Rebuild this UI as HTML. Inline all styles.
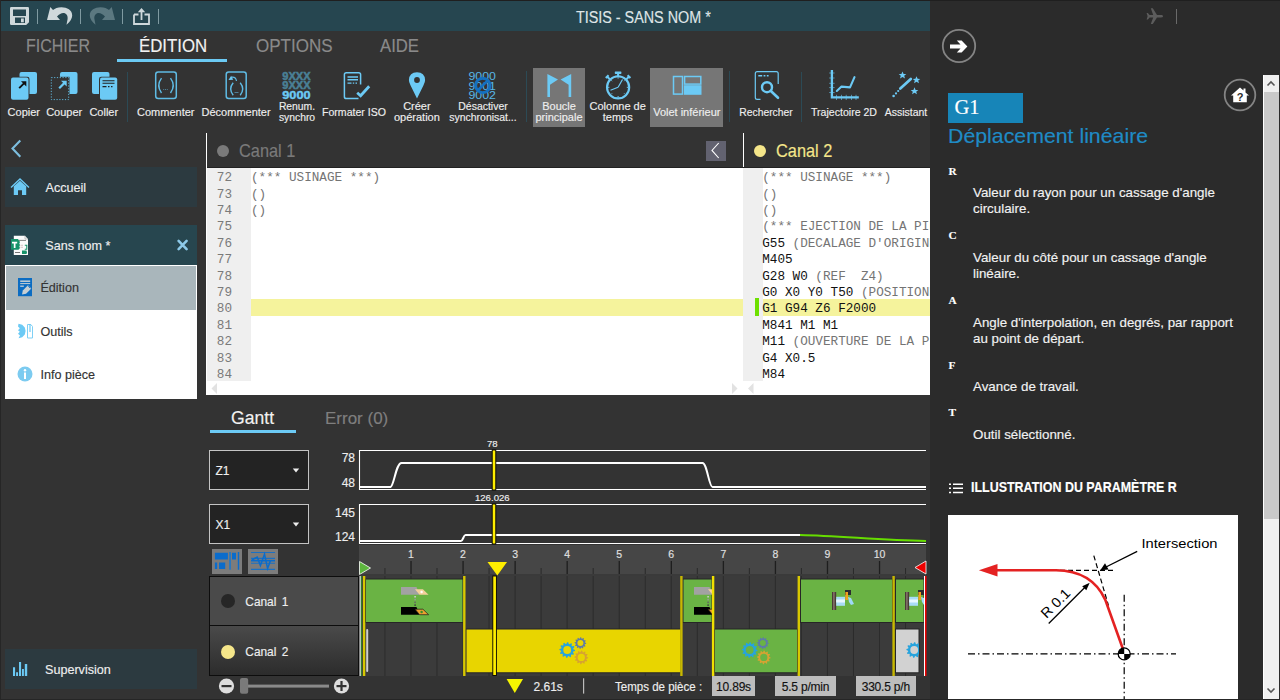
<!DOCTYPE html>
<html><head><meta charset="utf-8">
<style>
*{margin:0;padding:0;box-sizing:border-box}
html,body{width:1280px;height:700px;overflow:hidden}
body{background:#333333;font-family:"Liberation Sans",sans-serif;position:relative;color:#eee}
.t{-webkit-text-stroke:0.15px currentColor}
.a{position:absolute}
.t{position:absolute;white-space:nowrap}
/* title bar */
#topline{left:0;top:0;width:1280px;height:1px;background:#1f1f1f}
#leftline{left:0;top:0;width:1px;height:700px;background:#262626}
#title{left:1px;top:1px;width:929px;height:30px;background:#264650}
.tab{top:35.7px;font-size:17.8px;line-height:20px;color:#8a8a8a;transform:scaleX(0.9);transform-origin:0 0}
.rb{font-size:11px;color:#eeeeee;text-align:center;line-height:12px}
.sep{width:1px;background:#2c4a55}
.hl{background:#767676}
/* right panel */
#rp{left:930px;top:0;width:350px;height:700px;background:#2b2b2b}
.mono{font-family:"Liberation Mono",monospace}
.code{font-size:12.67px;line-height:16.4px;color:#111;white-space:pre}
.cm{color:#747474}
</style></head>
<body>
<div id="rp" class="a"></div>
<div id="topline" class="a"></div>
<div id="leftline" class="a"></div>
<div id="title" class="a"></div>
<div id="botline" class="a" style="left:0;top:699px;width:1280px;height:1px;background:#262626;z-index:5"></div>


<!-- title bar icons -->
<svg class="a" style="left:10px;top:7px" width="19" height="18" viewBox="0 0 19 18"><path d="M0 1.2Q0 0 1.2 0H17.8Q19 0 19 1.2V15.2L16.2 18H1.2Q0 18 0 16.8Z" fill="#cfd8db"/><rect x="3" y="2.5" width="13" height="6.5" fill="#264650"/><rect x="5" y="10.5" width="10" height="5.5" fill="#264650"/><rect x="11" y="11.5" width="2.8" height="3.8" fill="#cfd8db"/></svg>
<div class="a" style="left:37px;top:9px;width:1px;height:15px;background:#7f9aa1"></div>
<svg class="a" style="left:46px;top:7px" width="27" height="18" viewBox="0 0 27 18"><path d="M4.3 0.1L1 13.1H14L11 9.5C13 7.3 15.3 6 17.2 6C20.2 6 22 8.5 21.6 12L20.5 17.8C24 15 26.2 11.5 26.2 8.5C26.2 3 21 0.3 15.5 0.3C11.5 0.3 9 1.5 7 3Z" fill="#cfd8db"/></svg>
<div class="a" style="left:80px;top:9px;width:1px;height:15px;background:#7f9aa1"></div>
<svg class="a" style="left:89px;top:7px" width="27" height="18" viewBox="0 0 27 18"><g transform="translate(27,0) scale(-1,1)"><path d="M4.3 0.1L1 13.1H14L11 9.5C13 7.3 15.3 6 17.2 6C20.2 6 22 8.5 21.6 12L20.5 17.8C24 15 26.2 11.5 26.2 8.5C26.2 3 21 0.3 15.5 0.3C11.5 0.3 9 1.5 7 3Z" fill="#5b7880"/></g></svg>
<div class="a" style="left:122px;top:9px;width:1px;height:15px;background:#7f9aa1"></div>
<svg class="a" style="left:133px;top:7px" width="17" height="18" viewBox="0 0 17 18"><path d="M1 7.5H5.5M11.5 7.5H16V17H1V7.5" fill="none" stroke="#cfd8db" stroke-width="1.8"/><path d="M8.5 13V4" stroke="#cfd8db" stroke-width="1.8"/><path d="M4.8 5.2L8.5 1L12.2 5.2Z" fill="#cfd8db"/></svg>
<div class="a" style="left:158px;top:9px;width:1px;height:15px;background:#7f9aa1"></div>
<div class="t" style="left:576px;top:8.5px;font-size:15.6px;line-height:18px;color:#dfe5e7;transform:scaleX(0.92);transform-origin:0 0">TISIS - SANS NOM *</div>

<!-- tabs -->
<div class="t tab" style="left:25.5px">FICHIER</div>
<div class="t tab" style="left:138.5px;color:#f2f2f2;transform:scaleX(0.945)">ÉDITION</div>
<div class="a" style="left:117px;top:59px;width:110px;height:3px;background:#6ccaf4"></div>
<div class="t tab" style="left:255.5px;transform:scaleX(0.957)">OPTIONS</div>
<div class="t tab" style="left:380px;transform:scaleX(0.94)">AIDE</div>


<!-- ribbon icons -->
<div class="a hl" style="left:533px;top:68px;width:52px;height:59px"></div>
<div class="a hl" style="left:650px;top:68px;width:73px;height:59px"></div>
<div class="a sep" style="left:127px;top:72px;height:50px"></div>
<div class="a sep" style="left:526px;top:71px;height:51px"></div>
<div class="a sep" style="left:729px;top:71px;height:51px"></div>
<div class="a sep" style="left:801px;top:72px;height:50px"></div>
<svg class="a" style="left:0;top:60px" width="930" height="45" viewBox="0 60 930 45">
 <!-- Copier -->
 <rect x="19.5" y="72" width="17.5" height="22" rx="2" fill="#6ccaf5"/>
 <rect x="10.5" y="76.8" width="19" height="23.8" rx="2.2" fill="#333"/>
 <rect x="11" y="77.5" width="17.5" height="22.3" rx="2" fill="#6ccaf5"/>
 <path d="M19.2 88.2L24.5 82.9" stroke="#111" stroke-width="1.9"/><path d="M21 81.2H26.3V86.5Z" fill="#111"/>
 <!-- Couper -->
 <rect x="60" y="72" width="17.5" height="22" rx="2" fill="#6ccaf5"/>
 <rect x="50.5" y="76.8" width="19" height="23.8" fill="#333"/>
 <rect x="51.3" y="77.6" width="17.4" height="22" fill="none" stroke="#5fb3d8" stroke-width="1" stroke-dasharray="1.2 1.6"/>
 <path d="M59.2 88.2L64.5 82.9" stroke="#6ccaf5" stroke-width="2.2"/><path d="M61 80.8H66.7V86.5Z" fill="#6ccaf5"/>
 <!-- Coller -->
 <rect x="92" y="72" width="17.5" height="22" rx="2" fill="#6ccaf5"/>
 <rect x="99" y="76.8" width="19" height="23.8" rx="2.2" fill="#333"/>
 <rect x="100" y="77.5" width="17.2" height="22.3" rx="2" fill="#6ccaf5"/>
 <path d="M102.5 80.8H114.5M102.5 83.2H114.5" stroke="#222" stroke-width="1.1"/>
 <path d="M102.5 86.6H106.5M108 86.6H109.5M111 86.6H112.5" stroke="#222" stroke-width="1.1"/>
 <!-- Commenter -->
 <rect x="155.7" y="72" width="20.6" height="26.6" rx="2.5" fill="none" stroke="#5fbbe4" stroke-width="1.5"/>
 <path d="M161.5 78.2Q156 85.6 161.5 93" fill="none" stroke="#5fbbe4" stroke-width="1.4"/>
 <path d="M170.5 78.2Q176 85.6 170.5 93" fill="none" stroke="#5fbbe4" stroke-width="1.4"/>
 <path d="M163.2 89.5H168.5" stroke="#4f7f95" stroke-width="1" stroke-dasharray="1 0.8"/>
 <!-- Decommenter -->
 <rect x="226.2" y="72" width="20" height="26.6" rx="2.5" fill="none" stroke="#5fbbe4" stroke-width="1.5"/>
 <path d="M233.2 82.8Q228.2 89 233.2 95.3" fill="none" stroke="#5fbbe4" stroke-width="1.4"/>
 <path d="M240.2 82.8Q245.2 89 240.2 95.3" fill="none" stroke="#5fbbe4" stroke-width="1.4"/>
 <path d="M234.5 92.5H238.5" stroke="#4f7f95" stroke-width="1"/>
 <path d="M231.8 77.2Q235.8 76.8 236.5 81" fill="none" stroke="#5fbbe4" stroke-width="1.2"/>
 <path d="M228.5 80L231.2 75.8L233.2 79.8Z" fill="#6ccaf5"/>
 <!-- Renum -->
 <text x="282.3" y="80.2" font-family="Liberation Sans" font-weight="bold" font-size="10.8" fill="#4a8096" stroke="#4a8096" stroke-width="0.5" textLength="28.3" lengthAdjust="spacingAndGlyphs">9XXX</text>
 <text x="282.3" y="89.4" font-family="Liberation Sans" font-weight="bold" font-size="10.8" fill="#4a8096" stroke="#4a8096" stroke-width="0.5" textLength="28.3" lengthAdjust="spacingAndGlyphs">9XXX</text>
 <text x="282.3" y="99.3" font-family="Liberation Sans" font-weight="bold" font-size="11" fill="#6ccaf5" stroke="#6ccaf5" stroke-width="0.4" textLength="28.3" lengthAdjust="spacingAndGlyphs">9000</text>
 <!-- Formater ISO -->
 <path d="M358.5 98.6H346.3Q344.4 98.6 344.4 96.7V74.6Q344.4 72.7 346.3 72.7H358.7Q360.6 72.7 360.6 74.6V84.5" fill="none" stroke="#6ccaf5" stroke-width="1.5"/>
 <path d="M347.5 77H358M347.5 79.8H358" stroke="#6ccaf5" stroke-width="1.5"/>
 <path d="M347.5 83.2H351.5M352.8 83.2H354.2M355.5 83.2H357" stroke="#6ccaf5" stroke-width="1.3"/>
 <path d="M357.2 92.8L360.6 95.8L369.2 86.2" fill="none" stroke="#6ccaf5" stroke-width="2.8"/>
 <!-- Pin -->
 <path d="M417 98.5L410.6 85.5Q408.7 81.5 408.9 80Q409.3 72.2 417 72.2Q424.7 72.2 425.1 80Q425.3 81.5 423.4 85.5Z" fill="#6ccaf5"/>
 <circle cx="417" cy="80" r="2.9" fill="#333"/>
 <!-- Desactiver -->
 <text x="468.5" y="80.2" font-family="Liberation Sans" font-size="10.5" fill="#58b6e6" textLength="27.5" lengthAdjust="spacingAndGlyphs">9000</text>
 <text x="468.5" y="89.6" font-family="Liberation Sans" font-size="10.5" fill="#58b6e6" textLength="27.5" lengthAdjust="spacingAndGlyphs">9001</text>
 <text x="468.5" y="99" font-family="Liberation Sans" font-size="10.5" fill="#58b6e6" textLength="27.5" lengthAdjust="spacingAndGlyphs">9002</text>
 <circle cx="482.8" cy="85.4" r="7.2" fill="none" stroke="#1470c0" stroke-width="2.9"/>
 <path d="M478 90.2L487.6 80.6" stroke="#1470c0" stroke-width="2.6"/>
 <!-- Boucle flags -->
 <path d="M547.4 73.9L558 79.6L550 84.8V96.9H547.4Z" fill="#6ccaf5"/>
 <path d="M571.2 73.9L560.6 79.6L568.6 84.8V96.9H571.2Z" fill="#6ccaf5"/>
 <!-- Stopwatch -->
 <circle cx="618.1" cy="87.3" r="11.1" fill="none" stroke="#6ccaf5" stroke-width="2.1"/>
 <rect x="614.8" y="71.5" width="6.6" height="2.4" rx="0.6" fill="#6ccaf5"/>
 <rect x="617.1" y="73.5" width="2" height="3" fill="#6ccaf5"/>
 <path d="M607.2 76.6L609.8 79.2M605.8 78L608.6 75.2" stroke="#6ccaf5" stroke-width="2"/>
 <path d="M629 76.6L626.4 79.2M630.4 78L627.6 75.2" stroke="#6ccaf5" stroke-width="2"/>
 <path d="M618.1 87.3L622.5 79.5M618.1 87.3L610.5 90.2" stroke="#6ccaf5" stroke-width="1.2"/>
 <path d="M618.1 77.2V78.6M618.1 96V97.4M608 87.3H609.4M626.8 87.3H628.2M611 80.2L612 81.2M624.2 93.4L625.2 94.4M611 94.4L612 93.4M624.2 81.2L625.2 80.2" stroke="#6ccaf5" stroke-width="1"/>
 <!-- Volet -->
 <rect x="673.5" y="76.5" width="9" height="17.6" fill="none" stroke="#6ccaf5" stroke-width="1.5"/>
 <rect x="684.6" y="76.5" width="16.2" height="7.6" fill="none" stroke="#6ccaf5" stroke-width="1.5"/>
 <rect x="683.9" y="85.2" width="17.6" height="9.6" fill="#6ccaf5"/>
 <!-- Rechercher -->
 <path d="M760.5 99.3H757.2Q755.3 99.3 755.3 97.4V73.5Q755.3 71.6 757.2 71.6H776.3Q778.2 71.6 778.2 73.5V84" fill="none" stroke="#6ccaf5" stroke-width="1.2"/>
 <path d="M758.3 75.8H762.2M763.6 75.8H765.4M766.8 75.8H768.6" stroke="#6ccaf5" stroke-width="1.6"/>
 <circle cx="767" cy="87.2" r="5" fill="none" stroke="#6ccaf5" stroke-width="2.4"/>
 <path d="M770.6 90.8L778 97.8" stroke="#6ccaf5" stroke-width="2.6" stroke-linecap="round"/>
 <!-- Trajectoire -->
 <path d="M831.9 70V97.4H858.8" fill="none" stroke="#6ccaf5" stroke-width="2.3"/>
 <path d="M829.2 73H834.6M829.2 78H834.6M829.2 83.3H834.6M829.2 87.6H834.6M829.2 92.5H834.6M836.5 94.8V100M841.5 94.8V100M846.2 94.8V100M851.5 94.8V100M856 94.8V100" stroke="#6ccaf5" stroke-width="0.8" opacity="0.75"/>
 <path d="M836.8 91L841.5 86.6L850 87.4L854.5 77.2" fill="none" stroke="#6ccaf5" stroke-width="2.1" stroke-linecap="round" stroke-linejoin="round"/>
 <!-- Assistant -->
 <path d="M900.3 88.6L910.8 78.9" stroke="#6ccaf5" stroke-width="2.7" stroke-linecap="round"/><circle cx="898.2" cy="91" r="1.1" fill="#6ccaf5"/><circle cx="896" cy="93.4" r="1.1" fill="#6ccaf5"/><circle cx="893.6" cy="96" r="1.3" fill="#6ccaf5"/>
 <path transform="translate(0,-1.2)" d="M902.5 72.6L903.6 75.2L906.3 75.3L904.2 77L905 79.6L902.5 78.1L900 79.6L900.8 77L898.7 75.3L901.4 75.2Z" fill="#6ccaf5"/>
 <path transform="translate(0,-1.5)" d="M916.5 77.7L917.6 80.3L920.3 80.4L918.2 82.1L919 84.7L916.5 83.2L914 84.7L914.8 82.1L912.7 80.4L915.4 80.3Z" fill="#6ccaf5"/>
 <path transform="translate(0,-0.9)" d="M914.5 88.2L915.6 90.8L918.3 90.9L916.2 92.6L917 95.2L914.5 93.7L912 95.2L912.8 92.6L910.7 90.9L913.4 90.8Z" fill="#6ccaf5"/>
</svg>
<div class="t rb" style="left:-26.2px;top:105.9px;width:100px;line-height:12px">Copier</div>
<div class="t rb" style="left:14.2px;top:105.9px;width:100px;line-height:12px">Couper</div>
<div class="t rb" style="left:53.8px;top:105.9px;width:100px;line-height:12px">Coller</div>
<div class="t rb" style="left:115.8px;top:105.9px;width:100px;line-height:12px">Commenter</div>
<div class="t rb" style="left:186.1px;top:105.9px;width:100px;line-height:12px">Décommenter</div>
<div class="t rb" style="left:246.6px;top:101.2px;width:100px;transform:scaleX(0.94);transform-origin:50% 0;line-height:11.2px">Renum.<br>synchro</div>
<div class="t rb" style="left:304.4px;top:105.9px;width:100px;transform:scaleX(0.96);transform-origin:50% 0;line-height:12px">Formater ISO</div>
<div class="t rb" style="left:366.9px;top:101.2px;width:100px;line-height:11.2px">Créer<br>opération</div>
<div class="t rb" style="left:432.5px;top:101.2px;width:100px;transform:scaleX(0.95);transform-origin:50% 0;line-height:11.2px">Désactiver<br>synchronisat...</div>
<div class="t rb" style="left:509.0px;top:101.2px;width:100px;line-height:11.2px">Boucle<br>principale</div>
<div class="t rb" style="left:567.7px;top:101.2px;width:100px;line-height:11.2px">Colonne de<br>temps</div>
<div class="t rb" style="left:636.8px;top:105.9px;width:100px;line-height:12px">Volet inférieur</div>
<div class="t rb" style="left:716.1px;top:105.9px;width:100px;transform:scaleX(0.94);transform-origin:50% 0;line-height:12px">Rechercher</div>
<div class="t rb" style="left:794.0px;top:105.9px;width:100px;transform:scaleX(0.96);transform-origin:50% 0;line-height:12px">Trajectoire 2D</div>
<div class="t rb" style="left:855.8px;top:105.9px;width:100px;transform:scaleX(0.95);transform-origin:50% 0;line-height:12px">Assistant</div>


<!-- sidebar -->
<svg class="a" style="left:10px;top:139px" width="13" height="20" viewBox="0 0 13 20"><path d="M10.3 1.5L2.5 9.5L10.3 17.8" fill="none" stroke="#7dbedf" stroke-width="2.1"/></svg>
<div class="a" style="left:5px;top:167px;width:192px;height:40px;background:#2c3a40"></div>
<svg class="a" style="left:10px;top:178px" width="20" height="18" viewBox="0 0 20 18"><path d="M1 9.5L10 1L19 9.5" fill="none" stroke="#6ccaf5" stroke-width="1.4"/><path d="M3.8 8.3L10 2.8L16.2 8.3V17H12V12.2H8V17H3.8Z" fill="#6ccaf5"/></svg>
<div class="t" style="left:45.5px;top:180.1px;font-size:12.6px;line-height:16px;color:#eee;">Accueil</div>
<div class="a" style="left:5px;top:225px;width:192px;height:40px;background:#27464f"></div>
<svg class="a" style="left:10px;top:235px" width="19" height="21" viewBox="10 235 19 21"><path d="M13.8 235.8H25L28 239V255H13.8Z" fill="#fbfbfb"/><path d="M25 235.8V239H28" fill="none" stroke="#9a9a9a" stroke-width="0.6"/><path d="M19 240.4H26" stroke="#777" stroke-width="0.9"/><path d="M20.5 245.3H23M20.5 247.3H23" stroke="#c8b0b0" stroke-width="0.7"/><path d="M15 252.5H20" stroke="#666" stroke-width="0.9"/><path d="M24.8 245.2H26.8V249.2H24.8" fill="none" stroke="#17936a" stroke-width="1.1"/><path d="M22 250.5H26.5L27 252.5L26.5 254H22Z" fill="#17936a"/><path d="M11 239H18L19 240.5L20 242L19.3 243.5L20 245L19.3 246.5L20 248L18.5 249.8H11Z" fill="#17936a"/><path d="M12 241.8H17.2V243.6H15.5V248H13.8V243.6H12Z" fill="#fff"/></svg>
<div class="t" style="left:45.3px;top:238.2px;font-size:12.6px;line-height:16px;color:#eee;">Sans nom *</div>
<svg class="a" style="left:175.5px;top:239px" width="13" height="12" viewBox="0 0 13 12"><path d="M2.6 1.9L10.6 10.1M10.6 1.9L2.6 10.1" stroke="#8dc9e8" stroke-width="2.6" stroke-linecap="round"/></svg>
<div class="a" style="left:5px;top:265px;width:192px;height:134px;background:#ffffff"></div>
<div class="a" style="left:6px;top:266px;width:190px;height:44px;background:#a9b6bb"></div>
<svg class="a" style="left:18px;top:277.8px" width="15" height="19" viewBox="0 0 15 19"><rect x="0" y="0" width="14" height="18.2" fill="#0b6cc2"/><path d="M2.2 3.2H12.2" stroke="#c7cfd3" stroke-width="1.5"/><path d="M2.2 5.6H12.2" stroke="#c7cfd3" stroke-width="1"/><path d="M2.2 8.2H5.8" stroke="#c7cfd3" stroke-width="1.3"/><path d="M4 16.4L4.8 12.4L10 7.2L13.3 10.5L8.1 15.7Z" fill="#c7cfd3"/><path d="M10.2 8.2L12.3 10.3" stroke="#0b6cc2" stroke-width="0.8"/></svg>
<div class="t" style="left:40.4px;top:280.1px;font-size:12.6px;line-height:16px;color:#333;">Édition</div>
<svg class="a" style="left:17px;top:323px" width="17" height="16" viewBox="0 0 17 16"><path d="M1.5 0.8L5.2 1.8L7.8 4.5L8.6 8L7.8 11.5L5.2 14.2L1.5 15.2L3 12.6L1 10.8L2.8 8.8L1 7.2L2.8 5.2L1 3.4Z" fill="#6ccaf5"/><path d="M10.5 1.5H13.8L15.5 3.5V15H10.5Z" fill="none" stroke="#7fd0f5" stroke-width="1"/><path d="M13 1V9" stroke="#6ccaf5" stroke-width="1.2"/></svg>
<div class="t" style="left:40.4px;top:323.7px;font-size:12.6px;line-height:16px;color:#333;">Outils</div>
<svg class="a" style="left:17px;top:366px" width="16" height="16" viewBox="0 0 16 16"><circle cx="8" cy="8" r="7.5" fill="#7ccbf0"/><rect x="7" y="6.5" width="2" height="6.5" fill="#fff"/><circle cx="8" cy="4.2" r="1.2" fill="#fff"/></svg>
<div class="t" style="left:40.4px;top:367.3px;font-size:12.6px;line-height:16px;color:#333;">Info pièce</div>
<div class="a" style="left:5px;top:649px;width:192px;height:40px;background:#2c3a40"></div>
<svg class="a" style="left:12px;top:661px" width="17" height="16" viewBox="0 0 17 16"><path d="M1 6.2H3.1V15H1ZM4.1 11.3H6V15H4.1ZM7 1H9.1V15H7ZM10 8H11.9V15H10ZM12.8 2.9H15.2V15H12.8Z" fill="#6ccaf5"/></svg>
<div class="t" style="left:45px;top:662.3px;font-size:12.6px;line-height:16px;color:#eee;">Supervision</div>


<!-- editor -->
<div class="a" style="left:206px;top:133px;width:1px;height:262px;background:#ffffff"></div>
<div class="a" style="left:743px;top:133px;width:1px;height:35px;background:#ffffff"></div>
<div class="a" style="left:207px;top:167px;width:723px;height:1px;background:#222"></div>
<div class="a" style="left:207px;top:168px;width:723px;height:227px;background:#ffffff"></div>
<div class="a" style="left:207px;top:168px;width:44px;height:213px;background:#efefef"></div>
<div class="a" style="left:743px;top:168px;width:20px;height:213px;background:#efefef"></div>
<div class="a" style="left:251px;top:299.2px;width:491.5px;height:16.4px;background:#f5f39c"></div>
<div class="a" style="left:763px;top:299.2px;width:167px;height:16.4px;background:#f5f39c"></div>
<div class="a" style="left:755px;top:298px;width:4px;height:18px;background:#6ee000"></div>
<div class="a mono" style="left:208px;top:170.2px;width:24px;font-size:12.67px;line-height:16.4px;color:#7a7a7a;text-align:right"><div>72</div><div>73</div><div>74</div><div>75</div><div>76</div><div>77</div><div>78</div><div>79</div><div>80</div><div>81</div><div>82</div><div>83</div><div>84</div></div>
<div class="a mono code" style="left:251px;top:170.2px;width:491px;overflow:hidden"><div><span class="cm">(*** USINAGE ***)</span></div><div><span class="cm">()</span></div><div><span class="cm">()</span></div><div>&nbsp;</div><div>&nbsp;</div><div>&nbsp;</div><div>&nbsp;</div><div>&nbsp;</div><div>&nbsp;</div><div>&nbsp;</div><div>&nbsp;</div><div>&nbsp;</div><div>&nbsp;</div></div>
<div class="a mono code" style="left:762.2px;top:170.2px;width:167.8px;overflow:hidden"><div><span class="cm">(*** USINAGE ***)</span></div><div><span class="cm">()</span></div><div><span class="cm">()</span></div><div><span class="cm">(*** EJECTION DE LA PIECE ***)</span></div><div>G55 <span class="cm">(DECALAGE D'ORIGINE)</span></div><div>M405</div><div>G28 W0 <span class="cm">(REF  Z4)</span></div><div>G0 X0 Y0 T50 <span class="cm">(POSITIONNEMENT)</span></div><div>G1 G94 Z6 F2000</div><div>M841 M1 M1</div><div>M11 <span class="cm">(OUVERTURE DE LA PINCE)</span></div><div>G4 X0.5</div><div>M84</div></div>
<svg class="a" style="left:206px;top:381px" width="724" height="14" viewBox="206 381 724 14"><path d="M217 383V394L211.5 388.5Z" fill="#e2e2e2"/><path d="M732 383V394L737.5 388.5Z" fill="#e2e2e2"/><path d="M753.5 383V394L748 388.5Z" fill="#e2e2e2"/></svg>
<div class="a" style="left:217px;top:145px;width:12px;height:12px;border-radius:6px;background:#7a7a7a"></div>
<div class="t" style="left:239px;top:140px;font-size:17.8px;line-height:22px;color:#7a7a7a;transform:scaleX(0.92);transform-origin:0 0">Canal 1</div>
<div class="a" style="left:706px;top:141px;width:20px;height:20px;background:#626270"></div>
<svg class="a" style="left:706px;top:141px" width="20" height="20" viewBox="0 0 20 20"><path d="M12.7 2L6 9.4L12.7 17" fill="none" stroke="#fff" stroke-width="1.1"/></svg>
<div class="a" style="left:754px;top:145px;width:12px;height:12px;border-radius:6px;background:#f5e68a"></div>
<div class="t" style="left:775.5px;top:140px;font-size:17.8px;line-height:22px;color:#f5e68a;transform:scaleX(0.92);transform-origin:0 0">Canal 2</div>

<!-- gantt -->
<div class="t" style="left:231px;top:408.4px;font-size:17.6px;line-height:20px;color:#f2f2f2">Gantt</div>
<div class="t" style="left:325px;top:408.6px;font-size:17px;line-height:20px;color:#7f7f7f">Error (0)</div>
<div class="a" style="left:210px;top:430px;width:86px;height:3px;background:#6ccaf5"></div>
<div class="a" style="left:209px;top:450px;width:100px;height:40px;border:1px solid #c4c4c4;background:#232323"></div>
<div class="t" style="left:215.5px;top:465.2px;font-size:12px;line-height:12px;color:#f0f0f0">Z1</div>
<svg class="a" style="left:292px;top:467.5px" width="8" height="5" viewBox="0 0 8 5"><path d="M0.8 0.5H7.2L4 4.5Z" fill="#eee"/></svg>
<div class="a" style="left:209px;top:504px;width:100px;height:40px;border:1px solid #c4c4c4;background:#232323"></div>
<div class="t" style="left:215.5px;top:519.2px;font-size:12px;line-height:12px;color:#f0f0f0">X1</div>
<svg class="a" style="left:292px;top:521.5px" width="8" height="5" viewBox="0 0 8 5"><path d="M0.8 0.5H7.2L4 4.5Z" fill="#eee"/></svg>
<div class="t" style="left:295px;width:60px;text-align:right;top:451.4px;font-size:12px;line-height:14px;color:#eee">78</div>
<div class="t" style="left:295px;width:60px;text-align:right;top:475.6px;font-size:12px;line-height:14px;color:#eee">48</div>
<div class="t" style="left:295px;width:60px;text-align:right;top:505.8px;font-size:12px;line-height:14px;color:#eee">145</div>
<div class="t" style="left:295px;width:60px;text-align:right;top:529.6px;font-size:12px;line-height:14px;color:#eee">124</div>
<div class="t" style="left:452.3px;width:80px;text-align:center;top:437.4px;font-size:9.6px;line-height:14px;color:#eee">78</div>
<div class="t" style="left:452.3px;width:80px;text-align:center;top:491.2px;font-size:9.6px;line-height:14px;color:#eee">126.026</div>
<svg class="a" style="left:0;top:0" width="930" height="700" viewBox="0 0 930 700">
<path d="M926 450.5H359.5V489.5H926" fill="none" stroke="#fff" stroke-width="1.1"/>
<path d="M926 504.5H359.5V543.5H926" fill="none" stroke="#fff" stroke-width="1.1"/>
<path d="M360 487H390.5C394 486 396 463 401.5 463H702.5C707 463 709 487 712.5 487H926" fill="none" stroke="#fff" stroke-width="2"/>
<path d="M360 541H461C463 541 463.5 535 465.5 535H800" fill="none" stroke="#fff" stroke-width="2"/>
<path d="M800 535C840 536 880 540 926 541" fill="none" stroke="#66dd00" stroke-width="2"/>
<rect x="492.2" y="450" width="3.6" height="40" fill="#ffee00" stroke="#000" stroke-width="0.9"/>
<rect x="492.2" y="504" width="3.6" height="40" fill="#ffee00" stroke="#000" stroke-width="0.9"/>
<rect x="359" y="545" width="567" height="29" fill="#464646"/>
<rect x="359" y="574" width="567" height="2" fill="#3a3a3a"/>
<rect x="359" y="576" width="567" height="100" fill="#3b3b3b"/>
<rect x="358.40" y="576" width="1" height="100" fill="#2c2c2c"/>
<rect x="384.43" y="576" width="1" height="100" fill="#2c2c2c"/>
<rect x="384.43" y="568" width="1" height="6" fill="#2a2a2a"/>
<rect x="410.46" y="576" width="1" height="100" fill="#2c2c2c"/>
<rect x="410.36" y="561" width="1.3" height="13" fill="#1e1e1e"/>
<rect x="436.49" y="576" width="1" height="100" fill="#2c2c2c"/>
<rect x="436.49" y="568" width="1" height="6" fill="#2a2a2a"/>
<rect x="462.52" y="576" width="1" height="100" fill="#2c2c2c"/>
<rect x="462.42" y="561" width="1.3" height="13" fill="#1e1e1e"/>
<rect x="488.55" y="576" width="1" height="100" fill="#2c2c2c"/>
<rect x="488.55" y="568" width="1" height="6" fill="#2a2a2a"/>
<rect x="514.58" y="576" width="1" height="100" fill="#2c2c2c"/>
<rect x="514.48" y="561" width="1.3" height="13" fill="#1e1e1e"/>
<rect x="540.61" y="576" width="1" height="100" fill="#2c2c2c"/>
<rect x="540.61" y="568" width="1" height="6" fill="#2a2a2a"/>
<rect x="566.64" y="576" width="1" height="100" fill="#2c2c2c"/>
<rect x="566.54" y="561" width="1.3" height="13" fill="#1e1e1e"/>
<rect x="592.67" y="576" width="1" height="100" fill="#2c2c2c"/>
<rect x="592.67" y="568" width="1" height="6" fill="#2a2a2a"/>
<rect x="618.70" y="576" width="1" height="100" fill="#2c2c2c"/>
<rect x="618.60" y="561" width="1.3" height="13" fill="#1e1e1e"/>
<rect x="644.73" y="576" width="1" height="100" fill="#2c2c2c"/>
<rect x="644.73" y="568" width="1" height="6" fill="#2a2a2a"/>
<rect x="670.76" y="576" width="1" height="100" fill="#2c2c2c"/>
<rect x="670.66" y="561" width="1.3" height="13" fill="#1e1e1e"/>
<rect x="696.79" y="576" width="1" height="100" fill="#2c2c2c"/>
<rect x="696.79" y="568" width="1" height="6" fill="#2a2a2a"/>
<rect x="722.82" y="576" width="1" height="100" fill="#2c2c2c"/>
<rect x="722.72" y="561" width="1.3" height="13" fill="#1e1e1e"/>
<rect x="748.85" y="576" width="1" height="100" fill="#2c2c2c"/>
<rect x="748.85" y="568" width="1" height="6" fill="#2a2a2a"/>
<rect x="774.88" y="576" width="1" height="100" fill="#2c2c2c"/>
<rect x="774.78" y="561" width="1.3" height="13" fill="#1e1e1e"/>
<rect x="800.91" y="576" width="1" height="100" fill="#2c2c2c"/>
<rect x="800.91" y="568" width="1" height="6" fill="#2a2a2a"/>
<rect x="826.94" y="576" width="1" height="100" fill="#2c2c2c"/>
<rect x="826.84" y="561" width="1.3" height="13" fill="#1e1e1e"/>
<rect x="852.97" y="576" width="1" height="100" fill="#2c2c2c"/>
<rect x="852.97" y="568" width="1" height="6" fill="#2a2a2a"/>
<rect x="879.00" y="576" width="1" height="100" fill="#2c2c2c"/>
<rect x="878.90" y="561" width="1.3" height="13" fill="#1e1e1e"/>
<rect x="905.03" y="576" width="1" height="100" fill="#2c2c2c"/>
<rect x="905.03" y="568" width="1" height="6" fill="#2a2a2a"/>
</svg>
<div class="t" style="left:370.96px;width:80px;text-align:center;top:547.0px;font-size:10.5px;line-height:14px;color:#e0e0e0">1</div>
<div class="t" style="left:423.02px;width:80px;text-align:center;top:547.0px;font-size:10.5px;line-height:14px;color:#e0e0e0">2</div>
<div class="t" style="left:475.0799999999999px;width:80px;text-align:center;top:547.0px;font-size:10.5px;line-height:14px;color:#e0e0e0">3</div>
<div class="t" style="left:527.14px;width:80px;text-align:center;top:547.0px;font-size:10.5px;line-height:14px;color:#e0e0e0">4</div>
<div class="t" style="left:579.2px;width:80px;text-align:center;top:547.0px;font-size:10.5px;line-height:14px;color:#e0e0e0">5</div>
<div class="t" style="left:631.26px;width:80px;text-align:center;top:547.0px;font-size:10.5px;line-height:14px;color:#e0e0e0">6</div>
<div class="t" style="left:683.3199999999999px;width:80px;text-align:center;top:547.0px;font-size:10.5px;line-height:14px;color:#e0e0e0">7</div>
<div class="t" style="left:735.38px;width:80px;text-align:center;top:547.0px;font-size:10.5px;line-height:14px;color:#e0e0e0">8</div>
<div class="t" style="left:787.44px;width:80px;text-align:center;top:547.0px;font-size:10.5px;line-height:14px;color:#e0e0e0">9</div>
<div class="t" style="left:839.5px;width:80px;text-align:center;top:547.0px;font-size:10.5px;line-height:14px;color:#e0e0e0">10</div>
<svg class="a" style="left:0;top:0" width="930" height="700" viewBox="0 0 930 700">
<rect x="365.5" y="579" width="97.5" height="43.5" fill="#6ab344" stroke="#262626" stroke-width="1"/>
<rect x="683" y="579" width="29" height="43.5" fill="#6ab344" stroke="#262626" stroke-width="1"/>
<rect x="800.5" y="579" width="92.0" height="43.5" fill="#6ab344" stroke="#262626" stroke-width="1"/>
<rect x="895.5" y="579" width="28.5" height="43.5" fill="#6ab344" stroke="#262626" stroke-width="1"/>
<rect x="466" y="629" width="215" height="43.799999999999955" fill="#e8d500" stroke="#262626" stroke-width="1"/>
<rect x="714.5" y="629" width="83.0" height="43.799999999999955" fill="#6ab344" stroke="#262626" stroke-width="1"/>
<rect x="895.5" y="629" width="23.5" height="43.799999999999955" fill="#d2d2d2" stroke="#262626" stroke-width="1"/>
<path d="M401.00 587.00 L416.50 587.00 L419.60 594.70 L401.00 594.70Z" fill="#a2a2a2"/><path d="M415.00 589.20 L422.90 589.20 L428.60 594.70 L419.60 594.70Z" fill="#f4d09c"/><circle cx="421.6" cy="592" r="1.2" fill="#fff"/><rect x="414.3" y="596" width="1.6" height="1.5" fill="#ccc"/><rect x="414.3" y="598.8" width="1.6" height="1.5" fill="#999"/><rect x="414.3" y="601.6" width="1.6" height="1.5" fill="#666"/><rect x="414.3" y="604.4" width="1.6" height="1.5" fill="#444"/><path d="M401.00 607.00 L416.50 607.00 L419.60 614.70 L401.00 614.70Z" fill="#000"/><path d="M415.00 609.20 L422.90 609.20 L428.60 614.70 L419.60 614.70Z" fill="#eca030" stroke="#1a1a1a" stroke-width="0.7"/><circle cx="421.6" cy="612" r="1.3" fill="#3c8c2c"/>
<svg x="683" y="579" width="29" height="43.5" viewBox="683 579 29 43.5"><path d="M694.00 587.00 L709.50 587.00 L712.60 594.70 L694.00 594.70Z" fill="#a2a2a2"/><path d="M708.00 589.20 L715.90 589.20 L721.60 594.70 L712.60 594.70Z" fill="#f4d09c"/><circle cx="714.6" cy="592" r="1.2" fill="#fff"/><rect x="707.3" y="596" width="1.6" height="1.5" fill="#ccc"/><rect x="707.3" y="598.8" width="1.6" height="1.5" fill="#999"/><rect x="707.3" y="601.6" width="1.6" height="1.5" fill="#666"/><rect x="707.3" y="604.4" width="1.6" height="1.5" fill="#444"/><path d="M694.00 607.00 L709.50 607.00 L712.60 614.70 L694.00 614.70Z" fill="#000"/><path d="M708.00 609.20 L715.90 609.20 L721.60 614.70 L712.60 614.70Z" fill="#eca030" stroke="#1a1a1a" stroke-width="0.7"/><circle cx="714.6" cy="612" r="1.3" fill="#3c8c2c"/></svg>
<path d="M567.20 642.20 L568.22 642.27 L568.80 644.01 L569.57 644.27 L571.10 643.25 L571.95 643.81 L571.58 645.62 L572.12 646.23 L573.95 646.10 L574.41 647.02 L573.19 648.40 L573.35 649.19 L575.00 650.00 L574.93 651.02 L573.19 651.60 L572.93 652.37 L573.95 653.90 L573.39 654.75 L571.58 654.38 L570.97 654.92 L571.10 656.75 L570.18 657.21 L568.80 655.99 L568.01 656.15 L567.20 657.80 L566.18 657.73 L565.60 655.99 L564.83 655.73 L563.30 656.75 L562.45 656.19 L562.82 654.38 L562.28 653.77 L560.45 653.90 L559.99 652.98 L561.21 651.60 L561.05 650.81 L559.40 650.00 L559.47 648.98 L561.21 648.40 L561.47 647.63 L560.45 646.10 L561.01 645.25 L562.82 645.62 L563.43 645.08 L563.30 643.25 L564.22 642.79 L565.60 644.01 L566.39 643.85Z M571.10 650.00 A3.9 3.9 0 1 0 563.30 650.00 A3.9 3.9 0 1 0 571.10 650.00Z" fill="#27a3dd" fill-rule="evenodd"/><path d="M580.40 637.30 L581.16 637.35 L581.59 638.66 L582.16 638.85 L583.30 638.08 L583.93 638.50 L583.65 639.85 L584.05 640.30 L585.42 640.20 L585.76 640.88 L584.84 641.91 L584.96 642.50 L586.20 643.10 L586.15 643.86 L584.84 644.29 L584.65 644.86 L585.42 646.00 L585.00 646.63 L583.65 646.35 L583.20 646.75 L583.30 648.12 L582.62 648.46 L581.59 647.54 L581.00 647.66 L580.40 648.90 L579.64 648.85 L579.21 647.54 L578.64 647.35 L577.50 648.12 L576.87 647.70 L577.15 646.35 L576.75 645.90 L575.38 646.00 L575.04 645.32 L575.96 644.29 L575.84 643.70 L574.60 643.10 L574.65 642.34 L575.96 641.91 L576.15 641.34 L575.38 640.20 L575.80 639.57 L577.15 639.85 L577.60 639.45 L577.50 638.08 L578.18 637.74 L579.21 638.66 L579.80 638.54Z M583.40 643.10 A3.0 3.0 0 1 0 577.40 643.10 A3.0 3.0 0 1 0 583.40 643.10Z" fill="#5e7aa8" fill-rule="evenodd"/><path d="M581.30 650.60 L582.19 650.66 L582.70 652.18 L583.37 652.41 L584.70 651.51 L585.44 652.01 L585.12 653.58 L585.58 654.11 L587.19 654.00 L587.58 654.80 L586.52 656.00 L586.65 656.70 L588.10 657.40 L588.04 658.29 L586.52 658.80 L586.29 659.47 L587.19 660.80 L586.69 661.54 L585.12 661.22 L584.59 661.68 L584.70 663.29 L583.90 663.68 L582.70 662.62 L582.00 662.75 L581.30 664.20 L580.41 664.14 L579.90 662.62 L579.23 662.39 L577.90 663.29 L577.16 662.79 L577.48 661.22 L577.02 660.69 L575.41 660.80 L575.02 660.00 L576.08 658.80 L575.95 658.10 L574.50 657.40 L574.56 656.51 L576.08 656.00 L576.31 655.33 L575.41 654.00 L575.91 653.26 L577.48 653.58 L578.01 653.12 L577.90 651.51 L578.70 651.12 L579.90 652.18 L580.60 652.05Z M584.90 657.40 A3.6 3.6 0 1 0 577.70 657.40 A3.6 3.6 0 1 0 584.90 657.40Z" fill="#d6a232" fill-rule="evenodd"/>
<path d="M749.70 642.20 L750.72 642.27 L751.30 644.01 L752.07 644.27 L753.60 643.25 L754.45 643.81 L754.08 645.62 L754.62 646.23 L756.45 646.10 L756.91 647.02 L755.69 648.40 L755.85 649.19 L757.50 650.00 L757.43 651.02 L755.69 651.60 L755.43 652.37 L756.45 653.90 L755.89 654.75 L754.08 654.38 L753.47 654.92 L753.60 656.75 L752.68 657.21 L751.30 655.99 L750.51 656.15 L749.70 657.80 L748.68 657.73 L748.10 655.99 L747.33 655.73 L745.80 656.75 L744.95 656.19 L745.32 654.38 L744.78 653.77 L742.95 653.90 L742.49 652.98 L743.71 651.60 L743.55 650.81 L741.90 650.00 L741.97 648.98 L743.71 648.40 L743.97 647.63 L742.95 646.10 L743.51 645.25 L745.32 645.62 L745.93 645.08 L745.80 643.25 L746.72 642.79 L748.10 644.01 L748.89 643.85Z M753.60 650.00 A3.9 3.9 0 1 0 745.80 650.00 A3.9 3.9 0 1 0 753.60 650.00Z" fill="#27a3dd" fill-rule="evenodd"/><path d="M762.90 637.30 L763.66 637.35 L764.09 638.66 L764.66 638.85 L765.80 638.08 L766.43 638.50 L766.15 639.85 L766.55 640.30 L767.92 640.20 L768.26 640.88 L767.34 641.91 L767.46 642.50 L768.70 643.10 L768.65 643.86 L767.34 644.29 L767.15 644.86 L767.92 646.00 L767.50 646.63 L766.15 646.35 L765.70 646.75 L765.80 648.12 L765.12 648.46 L764.09 647.54 L763.50 647.66 L762.90 648.90 L762.14 648.85 L761.71 647.54 L761.14 647.35 L760.00 648.12 L759.37 647.70 L759.65 646.35 L759.25 645.90 L757.88 646.00 L757.54 645.32 L758.46 644.29 L758.34 643.70 L757.10 643.10 L757.15 642.34 L758.46 641.91 L758.65 641.34 L757.88 640.20 L758.30 639.57 L759.65 639.85 L760.10 639.45 L760.00 638.08 L760.68 637.74 L761.71 638.66 L762.30 638.54Z M765.90 643.10 A3.0 3.0 0 1 0 759.90 643.10 A3.0 3.0 0 1 0 765.90 643.10Z" fill="#5e7aa8" fill-rule="evenodd"/><path d="M763.80 650.60 L764.69 650.66 L765.20 652.18 L765.87 652.41 L767.20 651.51 L767.94 652.01 L767.62 653.58 L768.08 654.11 L769.69 654.00 L770.08 654.80 L769.02 656.00 L769.15 656.70 L770.60 657.40 L770.54 658.29 L769.02 658.80 L768.79 659.47 L769.69 660.80 L769.19 661.54 L767.62 661.22 L767.09 661.68 L767.20 663.29 L766.40 663.68 L765.20 662.62 L764.50 662.75 L763.80 664.20 L762.91 664.14 L762.40 662.62 L761.73 662.39 L760.40 663.29 L759.66 662.79 L759.98 661.22 L759.52 660.69 L757.91 660.80 L757.52 660.00 L758.58 658.80 L758.45 658.10 L757.00 657.40 L757.06 656.51 L758.58 656.00 L758.81 655.33 L757.91 654.00 L758.41 653.26 L759.98 653.58 L760.51 653.12 L760.40 651.51 L761.20 651.12 L762.40 652.18 L763.10 652.05Z M767.40 657.40 A3.6 3.6 0 1 0 760.20 657.40 A3.6 3.6 0 1 0 767.40 657.40Z" fill="#d6a232" fill-rule="evenodd"/>
<svg x="895.5" y="629" width="23.5" height="43.8" viewBox="895.5 629 23.5 43.8"><path d="M914.20 642.20 L915.22 642.27 L915.80 644.01 L916.57 644.27 L918.10 643.25 L918.95 643.81 L918.58 645.62 L919.12 646.23 L920.95 646.10 L921.41 647.02 L920.19 648.40 L920.35 649.19 L922.00 650.00 L921.93 651.02 L920.19 651.60 L919.93 652.37 L920.95 653.90 L920.39 654.75 L918.58 654.38 L917.97 654.92 L918.10 656.75 L917.18 657.21 L915.80 655.99 L915.01 656.15 L914.20 657.80 L913.18 657.73 L912.60 655.99 L911.83 655.73 L910.30 656.75 L909.45 656.19 L909.82 654.38 L909.28 653.77 L907.45 653.90 L906.99 652.98 L908.21 651.60 L908.05 650.81 L906.40 650.00 L906.47 648.98 L908.21 648.40 L908.47 647.63 L907.45 646.10 L908.01 645.25 L909.82 645.62 L910.43 645.08 L910.30 643.25 L911.22 642.79 L912.60 644.01 L913.39 643.85Z M918.10 650.00 A3.9 3.9 0 1 0 910.30 650.00 A3.9 3.9 0 1 0 918.10 650.00Z" fill="#27a3dd" fill-rule="evenodd"/><path d="M927.40 637.30 L928.16 637.35 L928.59 638.66 L929.16 638.85 L930.30 638.08 L930.93 638.50 L930.65 639.85 L931.05 640.30 L932.42 640.20 L932.76 640.88 L931.84 641.91 L931.96 642.50 L933.20 643.10 L933.15 643.86 L931.84 644.29 L931.65 644.86 L932.42 646.00 L932.00 646.63 L930.65 646.35 L930.20 646.75 L930.30 648.12 L929.62 648.46 L928.59 647.54 L928.00 647.66 L927.40 648.90 L926.64 648.85 L926.21 647.54 L925.64 647.35 L924.50 648.12 L923.87 647.70 L924.15 646.35 L923.75 645.90 L922.38 646.00 L922.04 645.32 L922.96 644.29 L922.84 643.70 L921.60 643.10 L921.65 642.34 L922.96 641.91 L923.15 641.34 L922.38 640.20 L922.80 639.57 L924.15 639.85 L924.60 639.45 L924.50 638.08 L925.18 637.74 L926.21 638.66 L926.80 638.54Z M930.40 643.10 A3.0 3.0 0 1 0 924.40 643.10 A3.0 3.0 0 1 0 930.40 643.10Z" fill="#5e7aa8" fill-rule="evenodd"/><path d="M928.30 650.60 L929.19 650.66 L929.70 652.18 L930.37 652.41 L931.70 651.51 L932.44 652.01 L932.12 653.58 L932.58 654.11 L934.19 654.00 L934.58 654.80 L933.52 656.00 L933.65 656.70 L935.10 657.40 L935.04 658.29 L933.52 658.80 L933.29 659.47 L934.19 660.80 L933.69 661.54 L932.12 661.22 L931.59 661.68 L931.70 663.29 L930.90 663.68 L929.70 662.62 L929.00 662.75 L928.30 664.20 L927.41 664.14 L926.90 662.62 L926.23 662.39 L924.90 663.29 L924.16 662.79 L924.48 661.22 L924.02 660.69 L922.41 660.80 L922.02 660.00 L923.08 658.80 L922.95 658.10 L921.50 657.40 L921.56 656.51 L923.08 656.00 L923.31 655.33 L922.41 654.00 L922.91 653.26 L924.48 653.58 L925.01 653.12 L924.90 651.51 L925.70 651.12 L926.90 652.18 L927.60 652.05Z M931.90 657.40 A3.6 3.6 0 1 0 924.70 657.40 A3.6 3.6 0 1 0 931.90 657.40Z" fill="#d6a232" fill-rule="evenodd"/></svg>
<rect x="832" y="592" width="4.2" height="18" fill="#4a3c36"/><rect x="833.2" y="592" width="1.4" height="18" fill="#8a7a70"/><rect x="836.2" y="596.8" width="8.8" height="9" fill="#a8dcf6"/><rect x="836.2" y="599.5" width="8.8" height="3" fill="#e8f8ff"/><rect x="845" y="590" width="6" height="5" fill="#2c2c30"/><rect x="845.4" y="592" width="2.6" height="8" fill="#f0a020"/><path d="M848 597L851 598L854 604L851 605L849 602Z" fill="#9fd8f8"/>
<svg x="895.5" y="579" width="28.5" height="43.5" viewBox="895.5 579 28.5 43.5"><rect x="905" y="592" width="4.2" height="18" fill="#4a3c36"/><rect x="906.2" y="592" width="1.4" height="18" fill="#8a7a70"/><rect x="909.2" y="596.8" width="8.8" height="9" fill="#a8dcf6"/><rect x="909.2" y="599.5" width="8.8" height="3" fill="#e8f8ff"/><rect x="918" y="590" width="6" height="5" fill="#2c2c30"/><rect x="918.4" y="592" width="2.6" height="8" fill="#f0a020"/><path d="M921 597L924 598L927 604L924 605L922 602Z" fill="#9fd8f8"/></svg>
<rect x="362.9" y="576" width="2.4" height="100" fill="#d8c800"/>
<rect x="463.09999999999997" y="576" width="2.4" height="100" fill="#d8c800"/>
<rect x="680.1999999999999" y="576" width="2.4" height="100" fill="#c8b800"/>
<rect x="711.9" y="576" width="2.4" height="100" fill="#f0e000"/>
<rect x="797.6" y="576" width="2.4" height="100" fill="#d8c800"/>
<rect x="892.4" y="576" width="2.4" height="100" fill="#c8b800"/>
<rect x="359.6" y="576" width="1.2" height="100" fill="#fff"/><rect x="360.8" y="576" width="1" height="100" fill="#2f8a2f"/>
<rect x="366.2" y="629" width="2" height="43" rx="1" fill="#cfcfcf"/>
<rect x="924" y="576" width="1" height="100" fill="#fff"/><rect x="925" y="576" width="1.5" height="100" fill="#ee0000"/>
<rect x="492.8" y="576" width="3.6" height="99.5" fill="#ffee00" stroke="#000" stroke-width="0.9"/>
<path d="M359.5 561.5L370.5 568L359.5 574.5Z" fill="#5db53e" stroke="#fff" stroke-width="0.8"/>
<path d="M487.5 562H507L497.3 575.5Z" fill="#ffee00"/>
<path d="M926 561L915 567.5L926 574Z" fill="#ee0000" stroke="#fff" stroke-width="0.8"/>
<path d="M506.6 679H523L514.8 693Z" fill="#f5f500"/>
<rect x="583" y="678.3" width="1.2" height="15.3" fill="#bbb"/>
<circle cx="226.5" cy="686" r="7.6" fill="#dedede"/><rect x="221.5" y="685" width="10" height="2.2" fill="#333"/>
<rect x="248" y="684.6" width="81" height="3" fill="#8a8a8a"/><rect x="240" y="678" width="8.2" height="15.8" rx="2" fill="#7a7a7a"/>
<circle cx="341.5" cy="686" r="7.6" fill="#dedede"/><rect x="336.5" y="685" width="10" height="2.2" fill="#333"/><rect x="340.4" y="681" width="2.2" height="10" fill="#333"/>
<rect x="212" y="549" width="30" height="25" fill="#7c7c7c"/><rect x="248" y="549" width="30" height="25" fill="#7c7c7c"/>
<path d="M214.9 552.8H227.9V559.6H214.9ZM214.9 562.5H217.2V569H214.9ZM219 562.5H225.2V569H219ZM232 552.8H236V559.6H232ZM237.8 552H239.2V569.7H237.8Z" fill="#0a6ccc"/><rect x="229.1" y="552" width="1.9" height="17.7" fill="#2a78c0"/>
<path d="M251 552.5H275M251 558.4H275M251 563.3H275M251 569.4H275" stroke="#1a70c4" stroke-width="1.1"/><path d="M251 560.7H275" stroke="#0a6ccc" stroke-width="1.6"/><path d="M252 560L257.2 557L260.4 565.5L264.5 554.2L267.6 568.5L270.5 560.5" fill="none" stroke="#0a6ccc" stroke-width="1.5"/>
</svg>
<div class="a" style="left:209px;top:576px;width:150px;height:50px;background:#4a4a4a;border:1.5px solid #0d0d0d"></div>
<div class="a" style="left:209px;top:625px;width:150px;height:51px;background:linear-gradient(#4a4a4a,#2c2c2c);border:1.5px solid #0d0d0d"></div>
<div class="a" style="left:220.5px;top:594.4px;width:14px;height:14px;border-radius:7px;background:#262626"></div>
<div class="a" style="left:220.5px;top:644.7px;width:14px;height:14px;border-radius:7px;background:#f5e68a"></div>
<div class="t" style="left:245.3px;top:594.8px;font-size:11.9px;line-height:14px;color:#eee;white-space:pre;word-spacing:2px">Canal 1</div>
<div class="t" style="left:245.3px;top:644.5px;font-size:11.9px;line-height:14px;color:#eee;white-space:pre;word-spacing:2px">Canal 2</div>
<div class="t" style="left:533.5px;top:679.8px;font-size:12px;line-height:14px;color:#eee;white-space:pre;">2.61s</div>
<div class="t" style="left:614.5px;top:679.8px;font-size:12px;line-height:14px;color:#eee;white-space:pre;transform:scaleX(0.96);transform-origin:0 0">Temps de pièce :</div>
<div class="a" style="left:712px;top:676px;width:43px;height:20px;background:#bdbdbd"></div>
<div class="t" style="left:712px;width:43px;text-align:center;top:679.6px;font-size:12px;line-height:14px;color:#111;letter-spacing:-0.2px">10.89s</div>
<div class="a" style="left:775px;top:676px;width:61px;height:20px;background:#bdbdbd"></div>
<div class="t" style="left:775px;width:61px;text-align:center;top:679.6px;font-size:12px;line-height:14px;color:#111;letter-spacing:-0.2px">5.5 p/min</div>
<div class="a" style="left:856px;top:676px;width:59.60000000000002px;height:20px;background:#bdbdbd"></div>
<div class="t" style="left:856px;width:59.60000000000002px;text-align:center;top:679.6px;font-size:12px;line-height:14px;color:#111;letter-spacing:-0.2px">330.5 p/h</div>
<!-- /gantt -->
<!-- right -->
<svg class="a" style="left:1146px;top:7px" width="18" height="18" viewBox="0 0 18 18"><path d="M17 9.2C17 8.4 16.2 8 15.2 8H11L6.8 1.3H4.8L7.2 8H3.6L1.9 5.9H0.6L1.6 9.2L0.6 12.5H1.9L3.6 10.4H7.2L4.8 17.1H6.8L11 10.4H15.2C16.2 10.4 17 10 17 9.2Z" fill="#5c5c5c"/></svg>
<div class="a" style="left:1176px;top:9px;width:1.3px;height:15px;background:#6a6a6a"></div>
<svg class="a" style="left:940px;top:27px" width="38" height="38" viewBox="0 0 38 38"><circle cx="19" cy="19" r="16.2" fill="none" stroke="#848484" stroke-width="1.8"/><path d="M10 17.4H20.5L16.8 13.6H21.6L27.4 19.5L21.6 25.4H16.8L20.5 21.6H10Z" fill="#fff"/></svg>
<svg class="a" style="left:1222px;top:77px" width="36" height="36" viewBox="0 0 36 36"><circle cx="18" cy="18" r="15.3" fill="none" stroke="#848484" stroke-width="1.8"/><path d="M9 18.5L18 10.5L21.5 13.6V11.5H23.5V15.4L27 18.5H24.8V25.3H11.2V18.5Z" fill="#fff"/><text x="18" y="23.6" text-anchor="middle" font-family="Liberation Sans" font-weight="bold" font-size="11" fill="#2b2b2b">?</text></svg>
<div class="a" style="left:1262.5px;top:75px;width:16.5px;height:625px;background:#f0f0f0;border-left:1px solid #ffffff"></div>
<div class="a" style="left:1263.5px;top:92px;width:15.5px;height:427px;background:#c9c9c9"></div>
<svg class="a" style="left:1263px;top:75px" width="16" height="17" viewBox="0 0 16 17"><path d="M4.5 10.5L8 7L11.5 10.5" fill="none" stroke="#555" stroke-width="1.6"/></svg>
<svg class="a" style="left:1263px;top:683px" width="16" height="17" viewBox="0 0 16 17"><path d="M4.5 5.5L8 9L11.5 5.5" fill="none" stroke="#555" stroke-width="1.6"/></svg>
<div class="a" style="left:948px;top:93px;width:75px;height:30px;background:#1785b8"></div>
<div class="t" style="left:954.5px;top:93.66px;font-size:20.5px;line-height:26.65px;color:#ffffff;font-family:'Liberation Serif',sans-serif;font-weight:normal;">G1</div>
<div class="t" style="left:947.5px;top:122.67px;font-size:20.2px;line-height:26.26px;color:#1f8bc6;font-family:'Liberation Sans',sans-serif;font-weight:normal;transform:scaleX(1.055);transform-origin:0 0">Déplacement linéaire</div>
<div class="t" style="left:948.5px;top:163.84px;font-size:11.3px;line-height:14.69px;color:#ffffff;font-family:'Liberation Serif',sans-serif;font-weight:bold;">R</div>
<div class="t" style="left:973px;top:184.09px;font-size:13.35px;line-height:17.36px;color:#f2f2f2;font-family:'Liberation Sans',sans-serif;font-weight:normal;">Valeur du rayon pour un cassage d'angle</div>
<div class="t" style="left:973px;top:200.09px;font-size:13.35px;line-height:17.36px;color:#f2f2f2;font-family:'Liberation Sans',sans-serif;font-weight:normal;">circulaire.</div>
<div class="t" style="left:948.5px;top:228.04px;font-size:11.3px;line-height:14.69px;color:#ffffff;font-family:'Liberation Serif',sans-serif;font-weight:bold;">C</div>
<div class="t" style="left:973px;top:248.79px;font-size:13.35px;line-height:17.36px;color:#f2f2f2;font-family:'Liberation Sans',sans-serif;font-weight:normal;">Valeur du côté pour un cassage d'angle</div>
<div class="t" style="left:973px;top:265.19px;font-size:13.35px;line-height:17.36px;color:#f2f2f2;font-family:'Liberation Sans',sans-serif;font-weight:normal;">linéaire.</div>
<div class="t" style="left:948.5px;top:293.14px;font-size:11.3px;line-height:14.69px;color:#ffffff;font-family:'Liberation Serif',sans-serif;font-weight:bold;">A</div>
<div class="t" style="left:973px;top:313.89px;font-size:13.35px;line-height:17.36px;color:#f2f2f2;font-family:'Liberation Sans',sans-serif;font-weight:normal;">Angle d'interpolation, en degrés, par rapport</div>
<div class="t" style="left:973px;top:330.29px;font-size:13.35px;line-height:17.36px;color:#f2f2f2;font-family:'Liberation Sans',sans-serif;font-weight:normal;">au point de départ.</div>
<div class="t" style="left:948.5px;top:357.84px;font-size:11.3px;line-height:14.69px;color:#ffffff;font-family:'Liberation Serif',sans-serif;font-weight:bold;">F</div>
<div class="t" style="left:973px;top:378.19px;font-size:13.35px;line-height:17.36px;color:#f2f2f2;font-family:'Liberation Sans',sans-serif;font-weight:normal;">Avance de travail.</div>
<div class="t" style="left:948.5px;top:405.24px;font-size:11.3px;line-height:14.69px;color:#ffffff;font-family:'Liberation Serif',sans-serif;font-weight:bold;">T</div>
<div class="t" style="left:973px;top:425.59px;font-size:13.35px;line-height:17.36px;color:#f2f2f2;font-family:'Liberation Sans',sans-serif;font-weight:normal;">Outil sélectionné.</div>
<svg class="a" style="left:948px;top:483px" width="16" height="11" viewBox="0 0 16 11"><path d="M1 1.2H3M1 5.3H3M1 9.4H3M5 1.2H15M5 5.3H15M5 9.4H15" stroke="#fff" stroke-width="1.5"/></svg>
<div class="t" style="left:971px;top:477.95px;font-size:14px;line-height:18.2px;color:#ffffff;font-family:'Liberation Sans',sans-serif;font-weight:bold;transform:scaleX(0.89);transform-origin:0 0">ILLUSTRATION DU PARAMÈTRE R</div>
<svg class="a" style="left:948px;top:515px" width="290" height="185" viewBox="948 515 290 185">
<rect x="948" y="515" width="290" height="185" fill="#fff"/>
<path d="M968 653.9H1176" stroke="#000" stroke-width="1.2" stroke-dasharray="7 3 1.5 3"/>
<path d="M1124.2 594.7V700" stroke="#000" stroke-width="1.2" stroke-dasharray="7 3 1.5 3"/>
<path d="M1052 570.3H1116" stroke="#000" stroke-width="1.2" stroke-dasharray="5 3"/>
<path d="M1093.8 555.6L1108.5 605.6" stroke="#000" stroke-width="1.2" stroke-dasharray="5 3"/>
<path d="M996 570.3H1056C1080 570.5 1096 580 1105.2 599.6L1124.2 652.5" fill="none" stroke="#e42222" stroke-width="2.6"/>
<path d="M978.9 570.3L997.5 564L997.5 576.6Z" fill="#e42222"/>
<path d="M1137.2 551.3L1106 567" stroke="#000" stroke-width="1.3"/>
<path d="M1100.3 570.3L1105 563.2L1108.5 569.6Z" fill="#000"/>
<path d="M1048.7 623.5L1085 587.3" stroke="#000" stroke-width="1.3"/>
<path d="M1089.7 582.8L1082.2 586.2L1086.3 590.3Z" fill="#000"/>
<circle cx="1124.2" cy="653.9" r="6" fill="#fff" stroke="#000" stroke-width="1.3"/>
<path d="M1124.2 653.9V647.9A6 6 0 0 0 1118.2 653.9Z M1124.2 653.9V659.9A6 6 0 0 0 1130.2 653.9Z" fill="#000"/>
<text x="1141.5" y="548" font-family="Liberation Sans" font-size="13.3" fill="#000" textLength="76" lengthAdjust="spacingAndGlyphs">Intersection</text>
<text x="0" y="0" font-family="Liberation Sans" font-size="14" fill="#000" transform="translate(1046.5,619) rotate(-45)" textLength="35" lengthAdjust="spacingAndGlyphs">R 0.1</text>
</svg>
<!-- /right -->
</body></html>
